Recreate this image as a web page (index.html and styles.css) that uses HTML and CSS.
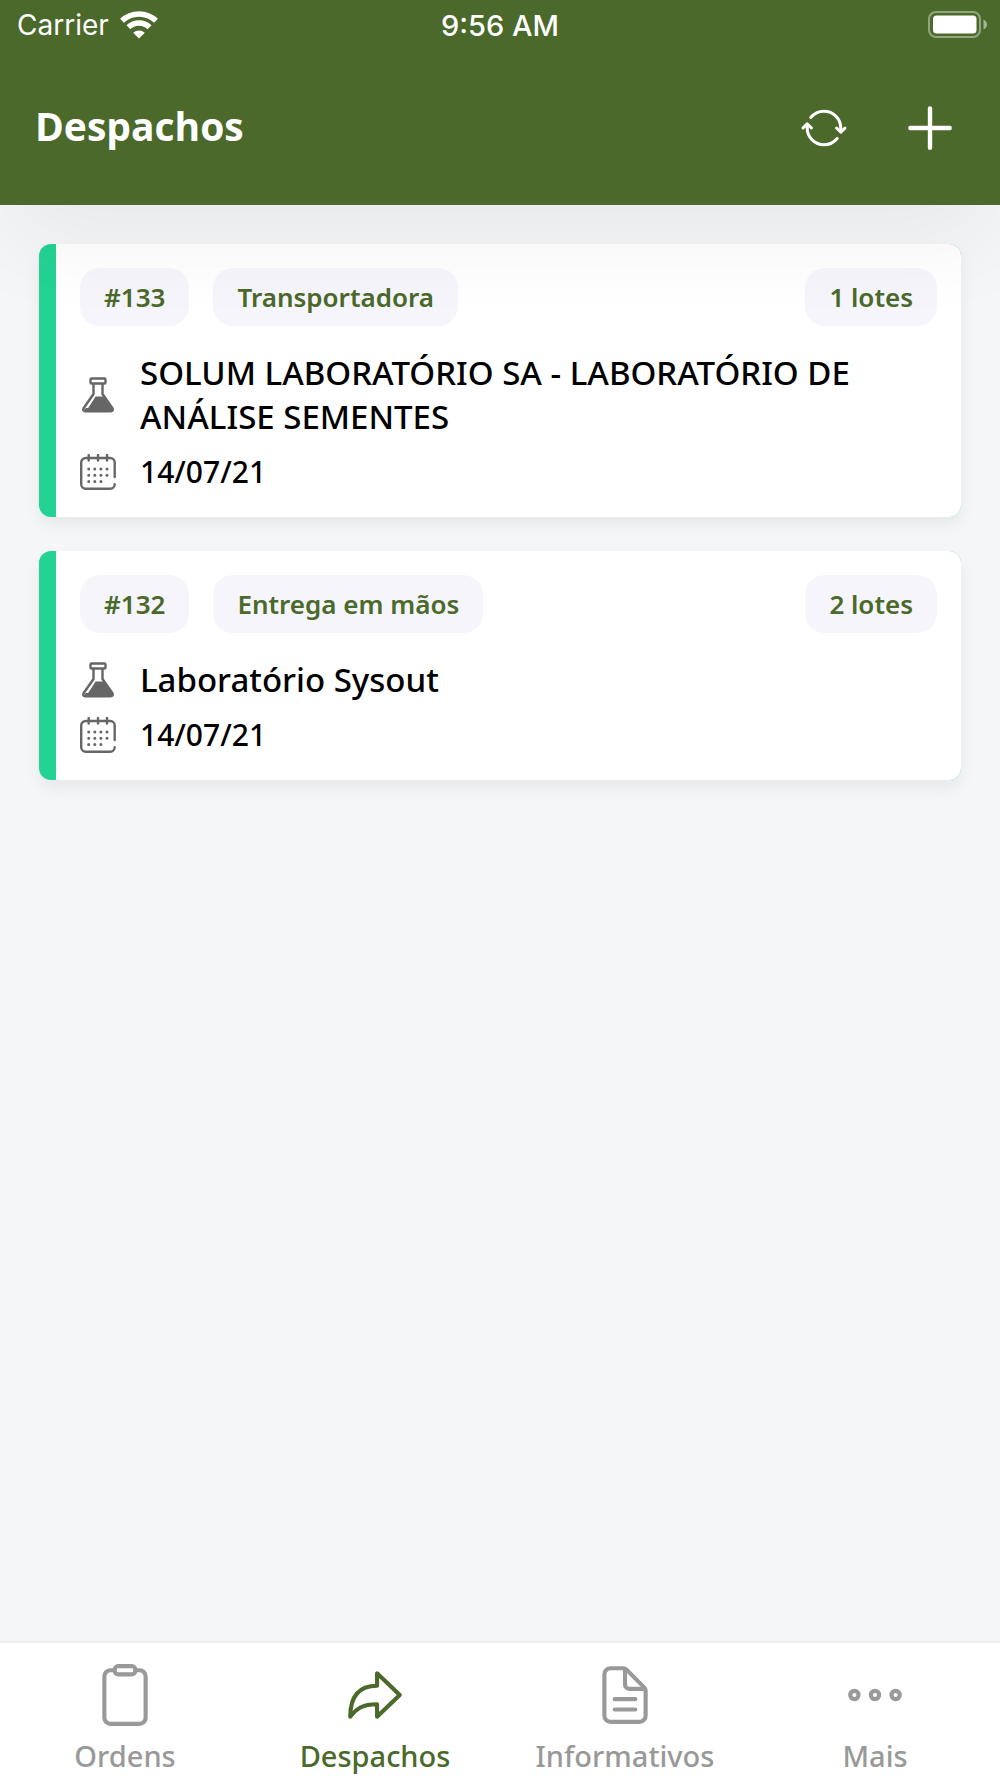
FILE: index.html
```html
<!DOCTYPE html>
<html lang="pt-BR">
<head>
  <meta charset="UTF-8">
  <meta name="viewport" content="width=device-width, initial-scale=1">
  <title>Despachos</title>
  <link rel="stylesheet" href="styles.css">
</head>

<body>
<!-- icons used more than once -->
<svg class="hidden">
  <symbol id="icon-flask" viewBox="0 0 36 36">
    <rect x="10.5" y="1.5" width="15" height="5" rx="1" fill="none" stroke="currentColor" stroke-width="2.4"/>
    <path d="M13.5 7v10L3.6 31.2c-1 1.8-.2 3.1 1.8 3.1h25.2c2 0 2.8-1.3 1.8-3.1L22.5 17V7" fill="none" stroke="currentColor" stroke-width="2.4"/>
    <path d="M15.6 19.5H23.5L32 32v2.3H5L4.5 32l2-1.2c.6.5 1.5.4 2-.3z" fill="currentColor"/>
  </symbol>
  <symbol id="icon-calendar" viewBox="0 0 36 36">
    <g fill="none" stroke="currentColor" stroke-width="2.4" stroke-linecap="round">
      <path d="M34.7 23V8.5a4.5 4.5 0 0 0-4.5-4.5H5.7a4.5 4.5 0 0 0-4.5 4.5v21.8a4.5 4.5 0 0 0 4.5 4.5h24.5a4.5 4.5 0 0 0 4.5-4.5"/>
      <path d="M8.7 1v5.5M18 1v5.5M27 1v5.5"/>
      <path d="M8.7 15h.01M14.8 15h.01M20.9 15h.01M27 15h.01M8.7 21.2h.01M14.8 21.2h.01M20.9 21.2h.01M27 21.2h.01M8.7 27.4h.01M14.8 27.4h.01M20.9 27.4h.01" stroke-width="3"/>
    </g>
  </symbol>
</svg>

<header class="header">
  <div class="status">
    <div class="status-carrier">
      <span>Carrier</span>
      <svg class="wifi" viewBox="0 0 38 28">
        <g fill="none" stroke="#fff" stroke-width="5.5">
          <path d="M2 9.8a24.5 24.5 0 0 1 34 0"/>
          <path d="M8.4 16.3a15.2 15.2 0 0 1 21.2 0"/>
        </g>
        <path d="M19 27.5l-5.8-5.8a8.5 8.5 0 0 1 11.6 0z" fill="#fff"/>
      </svg>
    </div>
    <time class="status-time">9:56 AM</time>
    <div class="status-battery">
      <svg class="battery" viewBox="0 0 60 28">
        <rect x="1" y="1" width="51" height="25" rx="7" fill="none" stroke="#fff" stroke-opacity=".4" stroke-width="2"/>
        <rect x="5" y="4.5" width="43.5" height="18" rx="3.5" fill="#fff"/>
        <path d="M55.5 8.5q3.5 2 3.5 5t-3.5 5z" fill="#fff" fill-opacity=".5"/>
      </svg>
    </div>
  </div>
  <div class="toolbar">
    <h1 class="title">Despachos</h1>
    <div class="actions">
      <button class="action" type="button" aria-label="Atualizar">
        <svg class="icon-sync" viewBox="0 0 512 512">
          <path class="line" d="M434.67 285.59v-29.8c0-98.73-80.24-178.79-179.2-178.79a179 179 0 0 0-140.14 67.36m-38.53 82v29.8C76.8 355 157 435 256 435a180.45 180.45 0 0 0 140-66.92"/>
          <path class="line" d="M32 256l44-44 46 44M480 256l-44 44-46-44"/>
        </svg>
      </button>
      <button class="action" type="button" aria-label="Adicionar">
        <svg class="icon-add" viewBox="0 0 512 512">
          <path class="line" d="M256 112v288M400 256H112"/>
        </svg>
      </button>
    </div>
  </div>
</header>

<main class="list">
  <article class="card">
    <div class="card-body">
      <div class="chips">
        <span class="chip">#133</span>
        <span class="chip">Transportadora</span>
        <span class="chip chip-right">1 lotes</span>
      </div>
      <div class="row">
        <svg class="row-icon"><use href="#icon-flask"/></svg>
        <p class="row-text">SOLUM LABORATÓRIO SA - LABORATÓRIO DE ANÁLISE SEMENTES</p>
      </div>
      <div class="row">
        <svg class="row-icon"><use href="#icon-calendar"/></svg>
        <p class="row-text row-date">14/07/21</p>
      </div>
    </div>
  </article>

  <article class="card">
    <div class="card-body">
      <div class="chips">
        <span class="chip">#132</span>
        <span class="chip">Entrega em mãos</span>
        <span class="chip chip-right">2 lotes</span>
      </div>
      <div class="row">
        <svg class="row-icon"><use href="#icon-flask"/></svg>
        <p class="row-text">Laboratório Sysout</p>
      </div>
      <div class="row">
        <svg class="row-icon"><use href="#icon-calendar"/></svg>
        <p class="row-text row-date">14/07/21</p>
      </div>
    </div>
  </article>
</main>

<nav class="tabs">
  <a class="tab" href="#ordens">
    <svg class="tab-icon" viewBox="0 0 512 512">
      <path class="line" d="M336 64h32a48 48 0 0 1 48 48v320a48 48 0 0 1-48 48H144a48 48 0 0 1-48-48V112a48 48 0 0 1 48-48h32"/>
      <rect class="line" x="176" y="32" width="160" height="64" rx="26"/>
    </svg>
    <span>Ordens</span>
  </a>
  <a class="tab tab-active" href="#despachos">
    <svg class="tab-icon" viewBox="0 0 512 512">
      <path class="line" d="M448 256L272 88v96C103.57 184 64 304.77 64 424c48.61-62.24 91.6-96 208-96v96z"/>
    </svg>
    <span>Despachos</span>
  </a>
  <a class="tab" href="#informativos">
    <svg class="tab-icon" viewBox="0 0 512 512">
      <path class="line" d="M416 221.25V416a48 48 0 0 1-48 48H144a48 48 0 0 1-48-48V96a48 48 0 0 1 48-48h98.75a32 32 0 0 1 22.62 9.37l141.26 141.26a32 32 0 0 1 9.37 22.62z"/>
      <path class="line" d="M256 56v120a32 32 0 0 0 32 32h120M176 288h160M176 368h160"/>
    </svg>
    <span>Informativos</span>
  </a>
  <a class="tab" href="#mais">
    <svg class="tab-icon" viewBox="0 0 512 512">
      <circle class="line" cx="96" cy="256" r="32"/>
      <circle class="line" cx="256" cy="256" r="32"/>
      <circle class="line" cx="416" cy="256" r="32"/>
    </svg>
    <span>Mais</span>
  </a>
</nav>
</body>
</html>
```

FILE: styles.css
```css
* {
  margin: 0;
  padding: 0;
  box-sizing: border-box;
}

body {
  min-height: 100vh;
  display: flex;
  flex-direction: column;
  background: #f5f6f8;
  color: #000;
  font-family: "Noto Sans", "Open Sans", sans-serif;
}

svg {
  display: block;
  flex-shrink: 0;
}

.hidden {
  display: none;
}

.line {
  fill: none;
  stroke: currentColor;
  stroke-width: 32px;
  stroke-linecap: round;
  stroke-linejoin: round;
}

/* header */
.header {
  position: relative;
  z-index: 1;
  background: #4a692a;
  color: #fff;
  padding-bottom: 42px;
  box-shadow: 0 44px 90px -4px rgba(0, 0, 0, 0.05);
}

.status {
  display: grid;
  grid-template-columns: 1fr auto 1fr;
  align-items: center;
  height: 50px;
  padding: 0 12px;
  font-family: Inter, sans-serif;
  font-size: 28px;
}

.status-carrier {
  display: flex;
  align-items: center;
  gap: 11px;
  padding-left: 5px;
}

.wifi {
  width: 38px;
  height: 28px;
}

.status-time {
  font-size: 29px;
  font-weight: 500;
}

.status-battery {
  justify-self: end;
}

.battery {
  width: 60px;
  height: 28px;
}

.toolbar {
  display: flex;
  justify-content: space-between;
  align-items: center;
  margin-top: 43px;
  padding: 0 35px;
}

.title {
  padding-bottom: 4px;
  font-family: "Open Sans", sans-serif;
  font-size: 39px;
  line-height: 48px;
  font-weight: 700;
}

.actions {
  display: flex;
  align-items: center;
  gap: 47px;
}

.action {
  border: 0;
  background: none;
  color: inherit;
  cursor: pointer;
}

.icon-sync {
  width: 48px;
  height: 48px;
}

.icon-add {
  width: 70px;
  height: 70px;
}

/* cards */
.list {
  flex: 1;
  display: flex;
  flex-direction: column;
  gap: 34px;
  padding: 39px;
}

.card {
  padding-left: 17px;
  background: #22d394;
  border-radius: 12px;
  box-shadow: 0 8px 16px rgba(0, 0, 0, 0.06);
}

.card-body {
  padding: 24px 24px 23px;
  background: #fff;
  border-radius: 0 12px 12px 0;
}

.chips {
  display: flex;
  gap: 24px;
  margin-bottom: 25px;
}

.chip {
  padding: 0 24px;
  border-radius: 20px;
  background: #f6f5fc;
  color: #4a692a;
  font-size: 26px;
  line-height: 58px;
  font-weight: 600;
}

.chip-right {
  margin-left: auto;
}

.row {
  display: flex;
  align-items: center;
  gap: 24px;
}

.row + .row {
  margin-top: 11px;
}

.row-icon {
  width: 36px;
  height: 36px;
  color: #666;
}

.row-text {
  font-size: 33px;
  line-height: 44px;
  font-weight: 500;
}

.row-date {
  font-size: 30px;
}

/* bottom tabs */
.tabs {
  display: flex;
  background: #fff;
  border-top: 2px solid #ebecee;
}

.tab {
  flex: 1;
  display: flex;
  flex-direction: column;
  align-items: center;
  gap: 9px;
  padding: 19px 0 3px;
  color: #999;
  font-size: 29px;
  line-height: 38px;
  font-weight: 500;
  text-decoration: none;
}

.tab-active {
  color: #4a692a;
}

.tab-icon {
  width: 66px;
  height: 66px;
}
```
